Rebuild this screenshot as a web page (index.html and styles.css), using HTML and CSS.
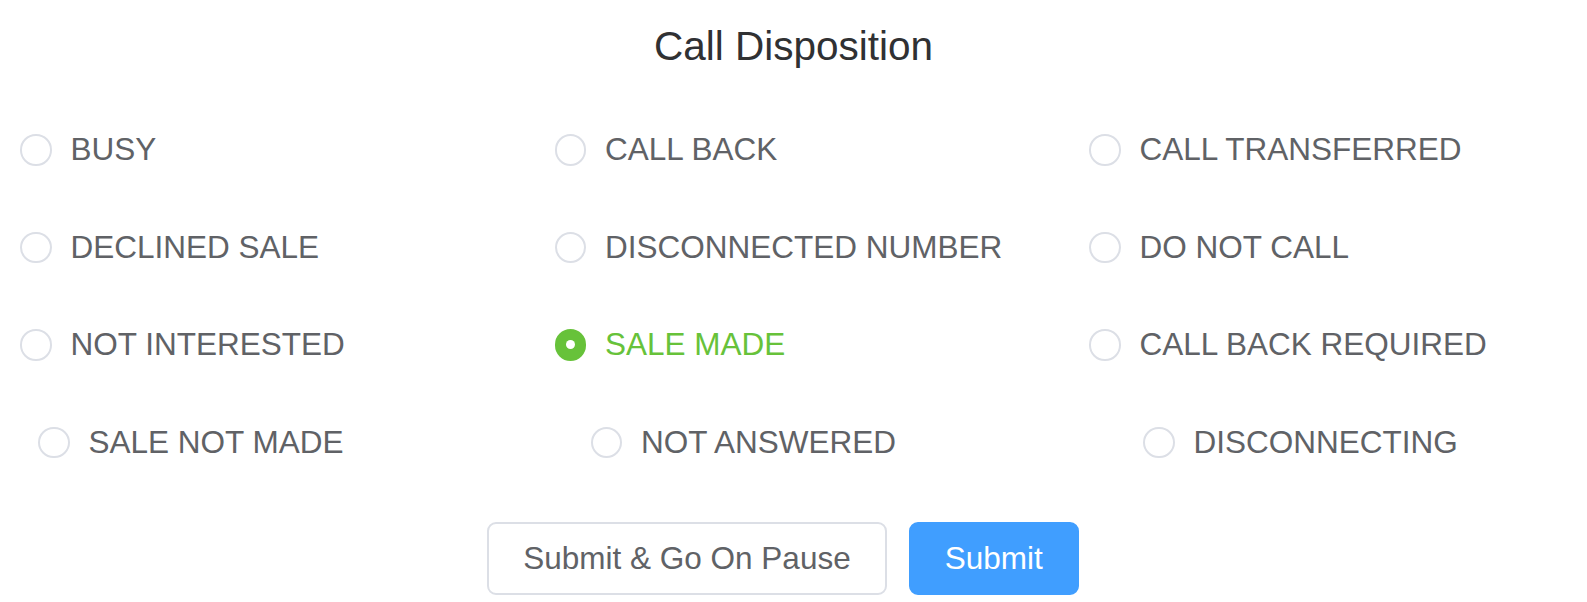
FILE: index.html
```html
<!DOCTYPE html>
<html lang="en">
<head>
<meta charset="utf-8">
<title>Call Disposition</title>
<link rel="stylesheet" href="styles.css">
</head>
<body>
<div class="dialog">
  <h1 class="title">Call Disposition</h1>
  <div class="options">
    <label class="radio"><span class="dot"></span><span class="label">BUSY</span></label>
    <label class="radio"><span class="dot"></span><span class="label">CALL BACK</span></label>
    <label class="radio"><span class="dot"></span><span class="label">CALL TRANSFERRED</span></label>
    <label class="radio"><span class="dot"></span><span class="label">DECLINED SALE</span></label>
    <label class="radio"><span class="dot"></span><span class="label">DISCONNECTED NUMBER</span></label>
    <label class="radio"><span class="dot"></span><span class="label">DO NOT CALL</span></label>
    <label class="radio"><span class="dot"></span><span class="label">NOT INTERESTED</span></label>
    <label class="radio checked"><span class="dot"></span><span class="label">SALE MADE</span></label>
    <label class="radio"><span class="dot"></span><span class="label">CALL BACK REQUIRED</span></label>
  </div>
  <div class="options extra">
    <label class="radio"><span class="dot"></span><span class="label">SALE NOT MADE</span></label>
    <label class="radio"><span class="dot"></span><span class="label">NOT ANSWERED</span></label>
    <label class="radio"><span class="dot"></span><span class="label">DISCONNECTING</span></label>
  </div>
  <div class="footer">
    <button class="btn">Submit &amp; Go On Pause</button>
    <button class="btn primary">Submit</button>
  </div>
</div>
</body>
</html>
```

FILE: styles.css
```css
html, body {
  margin: 0;
  padding: 0;
  background: #ffffff;
}

body {
  font-family: "Liberation Sans", Arial, sans-serif;
  width: 1587px;
  height: 602px;
  overflow: hidden;
}

.dialog {
  padding-top: 19px;
}

.title {
  margin: 0;
  font-size: 40.5px;
  font-weight: 400;
  line-height: 54px;
  color: #303133;
  text-align: center;
}

.options {
  display: grid;
  grid-template-columns: 534.5px 534.5px 1fr;
  grid-auto-rows: 97.5px;
  padding-left: 20px;
}

.options:first-of-type {
  margin-top: 28px;
}

.options.extra {
  grid-template-columns: 552.5px 552.5px 1fr;
  padding-left: 38px;
}

.radio {
  display: flex;
  align-items: center;
  cursor: pointer;
}

.dot {
  box-sizing: border-box;
  width: 31.5px;
  height: 31.5px;
  border: 2px solid #dcdfe6;
  border-radius: 50%;
  background: #fff;
  flex: none;
  position: relative;
}

.label {
  padding-left: 19px;
  font-size: 31.5px;
  color: #606266;
  line-height: 1;
  white-space: nowrap;
}

.radio.checked .dot {
  background: #67c23a;
  border-color: #67c23a;
}

.radio.checked .dot::after {
  content: "";
  position: absolute;
  left: 50%;
  top: 50%;
  width: 9px;
  height: 9px;
  margin: -4.5px 0 0 -4.5px;
  border-radius: 50%;
  background: #fff;
}

.radio.checked .label {
  color: #67c23a;
}

.footer {
  display: flex;
  justify-content: center;
  gap: 22px;
  margin-top: 31px;
  padding-right: 21px;
}

.btn {
  box-sizing: border-box;
  height: 73px;
  padding: 0 34px;
  border: 2px solid #dcdfe6;
  border-radius: 9px;
  background: #fff;
  color: #606266;
  font-family: "Liberation Sans", Arial, sans-serif;
  font-size: 31.5px;
  line-height: 1;
  cursor: pointer;
}

.btn.primary {
  background: #409eff;
  border-color: #409eff;
  color: #fff;
}
```
